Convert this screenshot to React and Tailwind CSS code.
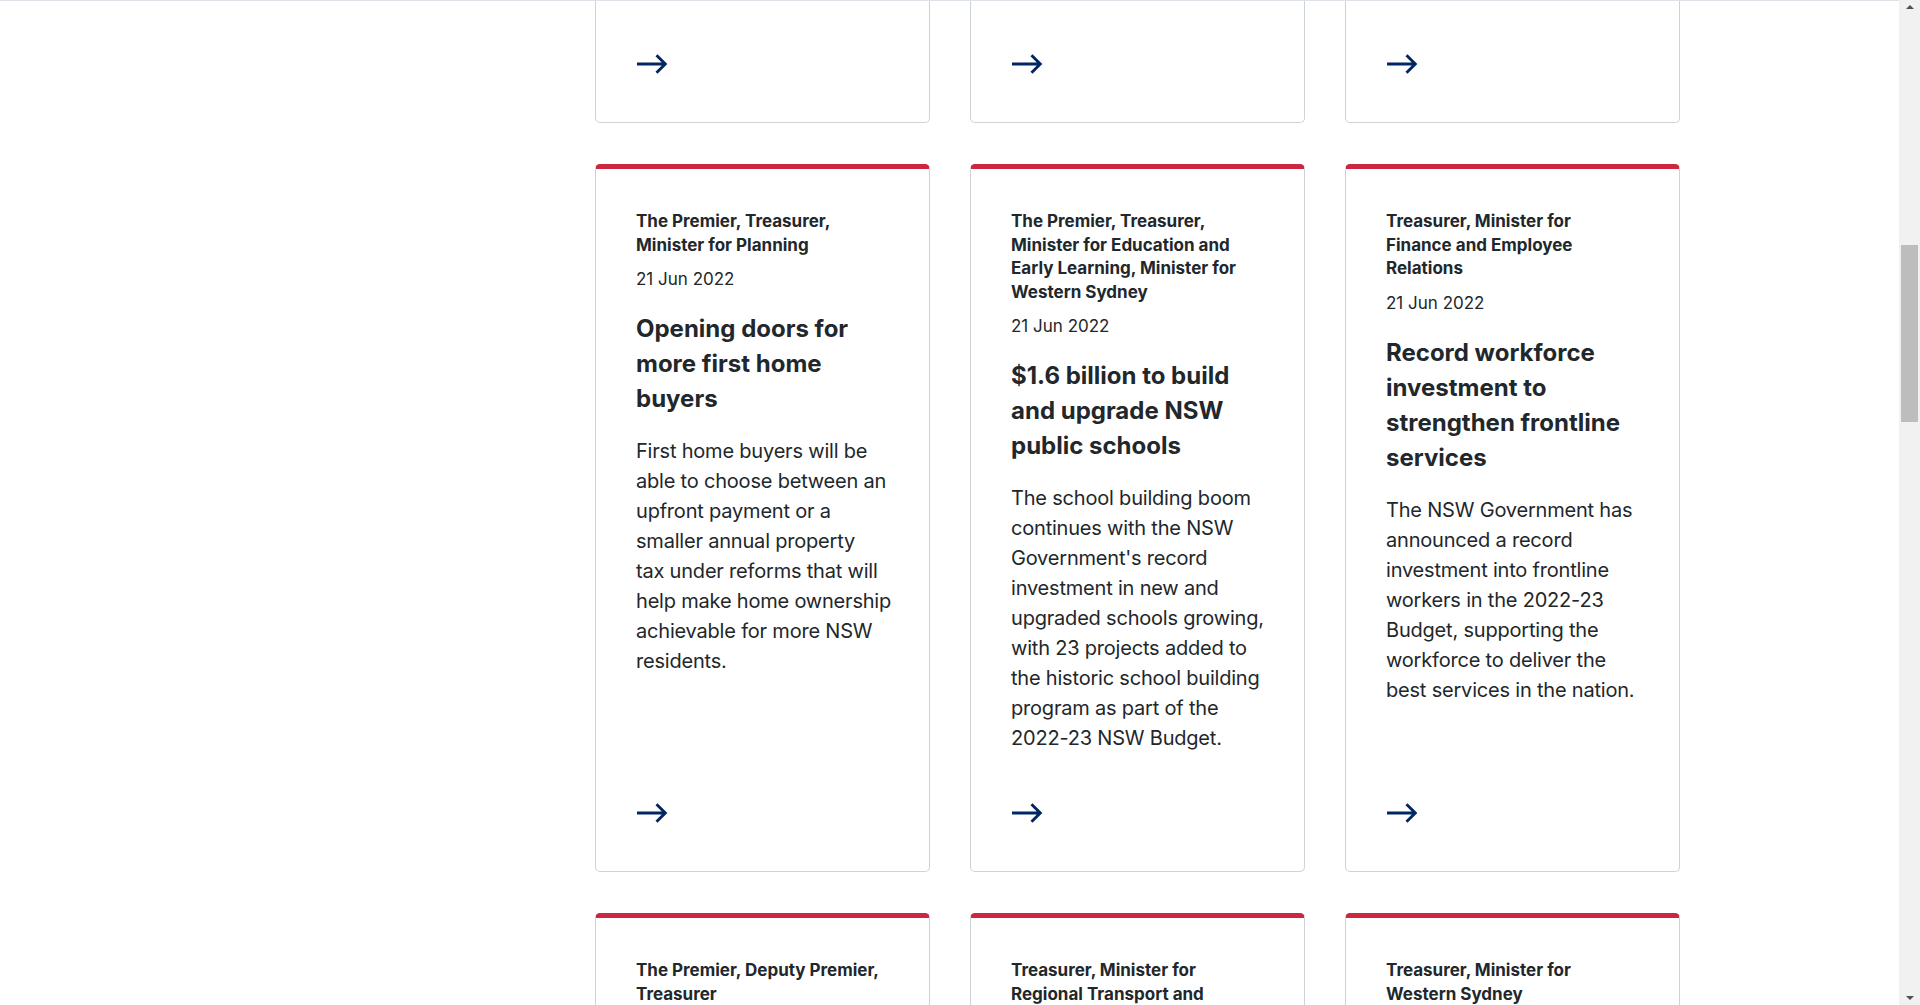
import React from 'react';

const FONT = "'Inter', 'Liberation Sans', sans-serif";

const Arrow = () => (
  <svg width="32" height="20" viewBox="0 0 32 20" fill="none" className="block">
    <path d="M1 10h29M20.5 1.2l8.8 8.8-8.8 8.8" stroke="#002664" strokeWidth="2.9" />
  </svg>
);

// lines are kept as they wrap on the page
const stories = [
  {
    source: ['The Premier, Treasurer,', 'Minister for Planning'],
    title: ['Opening doors for', 'more first home', 'buyers'],
    body: [
      'First home buyers will be',
      'able to choose between an',
      'upfront payment or a',
      'smaller annual property',
      'tax under reforms that will',
      'help make home ownership',
      'achievable for more NSW',
      'residents.',
    ],
  },
  {
    source: ['The Premier, Treasurer,', 'Minister for Education and', 'Early Learning, Minister for', 'Western Sydney'],
    title: ['$1.6 billion to build', 'and upgrade NSW', 'public schools'],
    body: [
      'The school building boom',
      'continues with the NSW',
      "Government's record",
      'investment in new and',
      'upgraded schools growing,',
      'with 23 projects added to',
      'the historic school building',
      'program as part of the',
      '2022-23 NSW Budget.',
    ],
  },
  {
    source: ['Treasurer, Minister for', 'Finance and Employee', 'Relations'],
    title: ['Record workforce', 'investment to', 'strengthen frontline', 'services'],
    body: [
      'The NSW Government has',
      'announced a record',
      'investment into frontline',
      'workers in the 2022-23',
      'Budget, supporting the',
      'workforce to deliver the',
      'best services in the nation.',
    ],
  },
];

const nextRow = [
  ['The Premier, Deputy Premier,', 'Treasurer'],
  ['Treasurer, Minister for', 'Regional Transport and'],
  ['Treasurer, Minister for', 'Western Sydney'],
];

const Lines = ({ lines }) => lines.map(l => (
  <span key={l} className="block whitespace-nowrap">{l}</span>
));

const App = () => {
  return (
    <div className="flex h-[1005px] overflow-hidden bg-white text-[#22272b]" style={{ fontFamily: FONT }}>
      <div className="flex-1 border-t border-[#dee3e9] overflow-hidden">
        <div className="flex">
          {/* sidebar column, empty at this scroll position */}
          <div className="w-[595px] shrink-0" />

          <div className="w-[1085px] shrink-0">
            {/* previous row, only the bottoms visible */}
            <div className="grid grid-cols-3 gap-10">
              {[0, 1, 2].map(i => (
                <div key={i} className="h-[122px] border-x border-b border-[#cdd3d6] rounded-b-[5px] flex flex-col justify-end px-10 pb-[48px]">
                  <Arrow />
                </div>
              ))}
            </div>

            <div className="grid grid-cols-3 gap-10 mt-[41px]">
              {stories.map(s => (
                <div key={s.title[0]} className="h-[708px] flex flex-col border border-[#cdd3d6] border-t-[5px] border-t-[#cc2640] rounded-[5px] px-10 pt-[41px] pb-[48px]">
                  <p className="text-[17px] font-bold leading-[23.5px]"><Lines lines={s.source} /></p>
                  <p className="text-[17px] leading-[24px] mt-[10px]">21 Jun 2022</p>
                  <h3 className="text-[24px] font-bold leading-[35px] mt-[20px]"><Lines lines={s.title} /></h3>
                  <p className="text-[20px] tracking-[-0.2px] leading-[30px] mt-[20px]"><Lines lines={s.body} /></p>
                  <div className="mt-auto">
                    <Arrow />
                  </div>
                </div>
              ))}
            </div>

            <div className="grid grid-cols-3 gap-10 mt-[41px]">
              {nextRow.map(src => (
                <div key={src[1]} className="h-[200px] border border-[#cdd3d6] border-t-[5px] border-t-[#cc2640] rounded-[5px] px-10 pt-[41px]">
                  <p className="text-[17px] font-bold leading-[23.5px]"><Lines lines={src} /></p>
                </div>
              ))}
            </div>
          </div>
        </div>
      </div>

      {/* scrollbar */}
      <div className="w-[21px] shrink-0 bg-[#f1f1f1] flex flex-col items-center">
        <div className="h-[14px] flex items-center justify-center">
          <div className="w-0 h-0 border-x-[4px] border-x-transparent border-b-[4px] border-b-[#505050]" />
        </div>
        <div className="h-[231px]" />
        <div className="w-[17px] h-[177px] bg-[#bdbdbd]" />
        <div className="flex-1" />
        <div className="h-[14px] flex items-center justify-center">
          <div className="w-0 h-0 border-x-[4px] border-x-transparent border-t-[4px] border-t-[#505050]" />
        </div>
      </div>
    </div>
  );
};

export default App;
